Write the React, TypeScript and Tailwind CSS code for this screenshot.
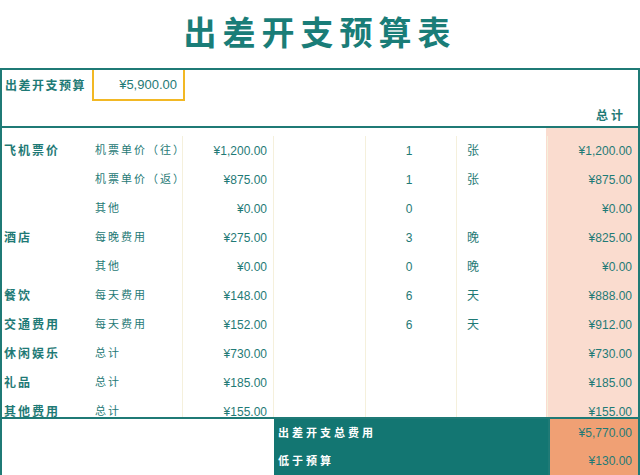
const rows = [
  ['飞机票价', '机票单价（往）', '¥1,200.00', '1', '张', '¥1,200.00'],
  ['', '机票单价（返）', '¥875.00', '1', '张', '¥875.00'],
  ['', '其他', '¥0.00', '0', '', '¥0.00'],
  ['酒店', '每晚费用', '¥275.00', '3', '晚', '¥825.00'],
  ['', '其他', '¥0.00', '0', '晚', '¥0.00'],
  ['餐饮', '每天费用', '¥148.00', '6', '天', '¥888.00'],
  ['交通费用', '每天费用', '¥152.00', '6', '天', '¥912.00'],
  ['休闲娱乐', '总计', '¥730.00', '', '', '¥730.00'],
  ['礼品', '总计', '¥185.00', '', '', '¥185.00'],
  ['其他费用', '总计', '¥155.00', '', '', '¥155.00'],
];

const cell = 'border-r border-[#f5f0dc] flex items-center';

export default function App() {
  return (
    <div
      className="w-[640px] h-[475px] bg-white text-[#1f7a76] text-[12px] overflow-hidden flex flex-col"
      style={{ fontFamily: '"Liberation Sans", "Noto Sans CJK SC", sans-serif' }}
    >
      <div className="h-[68px] shrink-0 flex items-center justify-center text-[33px] font-bold tracking-[6px] text-[#1a7d78]">
        出差开支预算表
      </div>
      <div className="border-2 border-[#1f7a76] border-b-0 h-[58px] shrink-0 flex flex-col">
        <div className="flex h-[31px] shrink-0">
          <div className="w-[90px] flex items-center pl-[3px] font-bold tracking-[1.5px] whitespace-nowrap">出差开支预算</div>
          <div className="w-[93px] border-2 border-t-0 border-[#f2b824] flex items-center justify-end pr-[6px] text-[13px]">¥5,900.00</div>
        </div>
        <div className="flex-1 flex justify-end items-end pr-[12px] pb-[1px] font-bold tracking-[3px]">总计</div>
      </div>
      <div className="border-x-2 border-t-2 border-[#1f7a76] flex-1 min-h-0 flex flex-col">
        <div className="grid grid-cols-[88px_93px_91px_92px_91px_91px_1fr] auto-rows-[29px] flex-1 min-h-0 overflow-hidden pt-[8px] bg-[linear-gradient(to_right,transparent_544px,#fadccf_544px)]">
          {rows.map((r, i) => (
            <div key={i} className="contents">
              <div className="flex items-center pl-[2px] font-bold tracking-[2px]">{r[0]}</div>
              <div className={`${cell} pl-[5px] tracking-[2px] text-[11px]`}>{r[1]}</div>
              <div className={`${cell} justify-end pr-[6px]`}>{r[2]}</div>
              <div className={cell}></div>
              <div className={`${cell} justify-center pr-[4px]`}>{r[3]}</div>
              <div className={`${cell} pl-[10px]`}>{r[4]}</div>
              <div className="flex items-center justify-end pr-[6px] bg-[#fadccf]">{r[5]}</div>
            </div>
          ))}
        </div>
        <div className="grid grid-cols-[272px_274px_1fr] h-[58px] shrink-0 border-t-2 border-[#1f7a76]">
          <div></div>
          <div className="bg-[#137672] text-white font-bold tracking-[3px] flex flex-col justify-around pl-[4px] text-[11px]">
            <div>出差开支总费用</div>
            <div>低于预算</div>
          </div>
          <div className="bg-[#f0a074] border-l-2 border-[#1f7a76] flex flex-col justify-around items-end pr-[6px]">
            <div>¥5,770.00</div>
            <div>¥130.00</div>
          </div>
        </div>
      </div>
    </div>
  );
}
